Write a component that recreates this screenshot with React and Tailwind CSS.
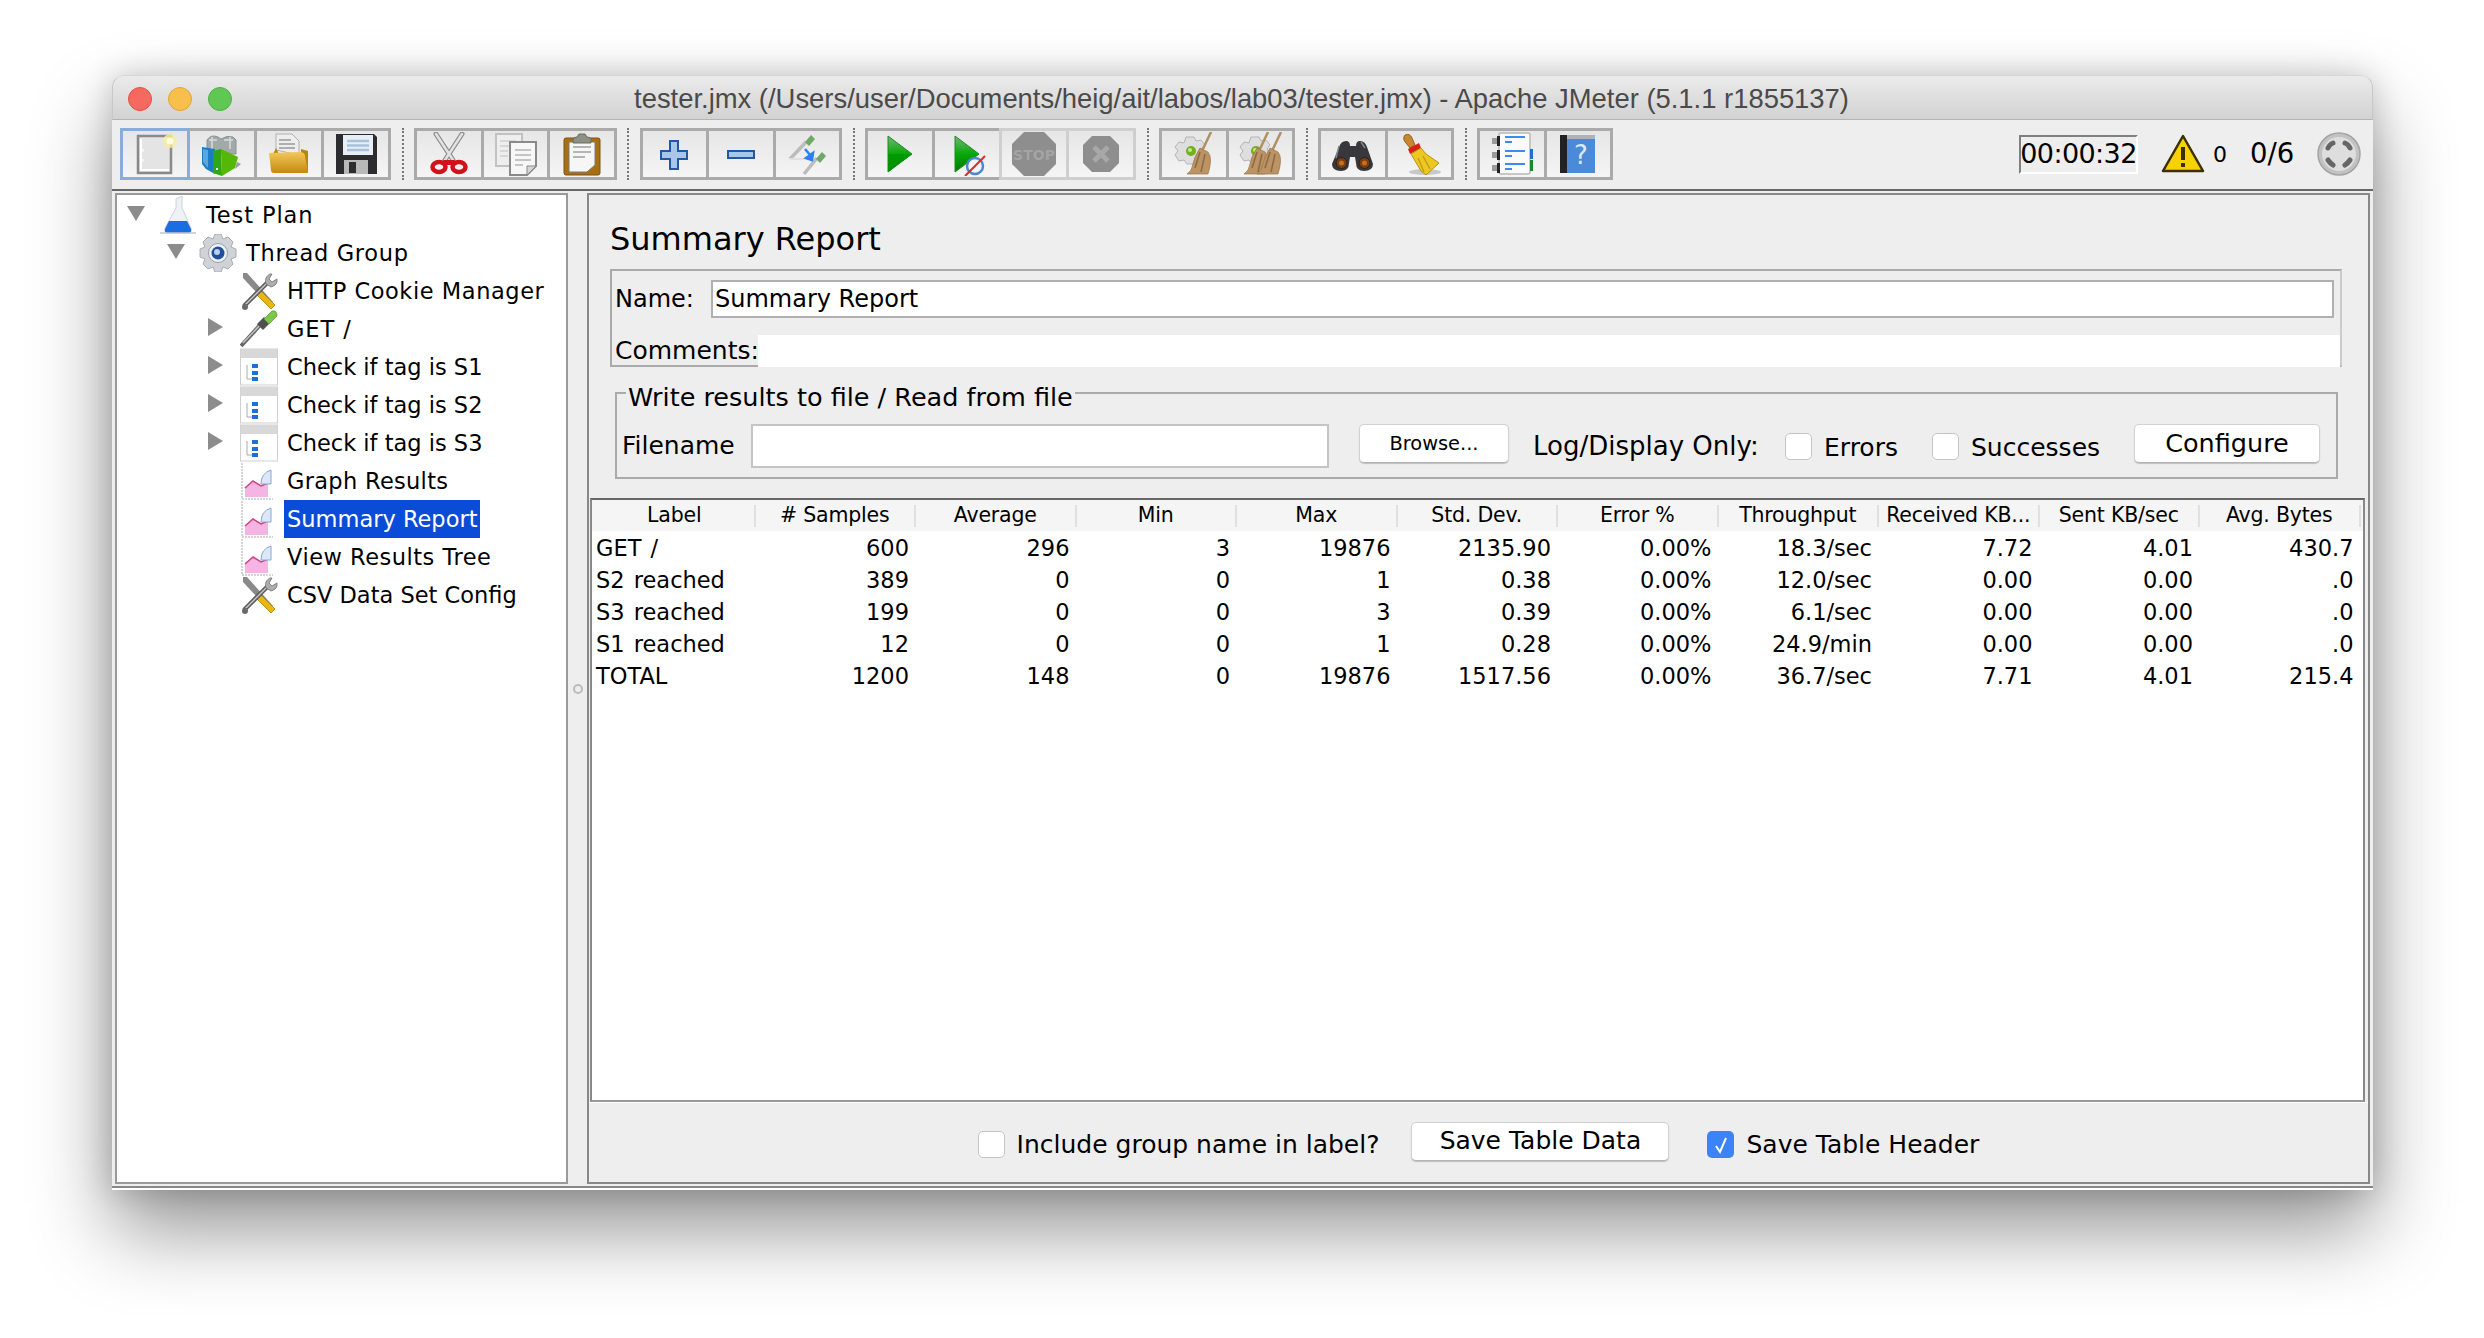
const ui = { fontFamily: '"DejaVu Sans", sans-serif' }

// toolbar icons are drawn on a 44 box, tree icons on a 38 box
const Ic = ({ size = 44, children }) => (
  <svg width={size} height={size} viewBox={`0 0 ${size} ${size}`} className="shrink-0">{children}</svg>
)

const NewIcon = () => (
  <Ic>
    <rect x="5" y="4" width="33" height="37" fill="#e4e4e4" stroke="#8a8a8a" strokeWidth="2.5" />
    <path d="M8 7v31h28" fill="none" stroke="#fff" strokeWidth="2" />
    <rect x="8" y="17" width="2.5" height="2.5" fill="#fff" />
    <rect x="8" y="27" width="2.5" height="2.5" fill="#fff" />
    <circle cx="37" cy="9" r="7" fill="#f7ee9c" opacity=".8" />
    <circle cx="37" cy="9" r="3.5" fill="#fdfbe0" />
  </Ic>
)
const TemplatesIcon = () => (
  <Ic>
    <path d="M7 8q4-6 11-3l3 2q6-4 12-2l3 3v14H7z" fill="#a3a9a8" stroke="#8b9191" />
    <path d="M9 8h8M24 8h9M12 5v12M30 5v12" stroke="#d8dcdc" strokeWidth="1.5" fill="none" />
    <path d="M2 15l13 2v25l-9-5-4-5z" fill="#1c7cc4" />
    <path d="M3 17l5 1v18l-5-6z" fill="#56a8e0" />
    <path d="M13 19l8-2 1 27-9-3z" fill="#2ea814" />
    <path d="M21 17l17 8-3 11-13 8z" fill="#55b806" />
    <path d="M37 30l4 2-6 5z" fill="#9a9a9a" />
    <rect x="16" y="36" width="2" height="2" fill="#fff" />
  </Ic>
)
const OpenIcon = () => (
  <Ic>
    <path d="M9 18V2h16l7 7v14z" fill="#eee" stroke="#b0b0b0" />
    <path d="M12 8h12M12 12h16M12 16h16" stroke="#999" strokeWidth="1.5" />
    <path d="M6 22l3-6 3 6h22v-5l7 2v21H6z" fill="#b98412" />
    <path d="M2 21l30-1q6 0 6 4l3 17H7q-3 0-3-3z" fill="url(#fold)" />
    <defs>
      <linearGradient id="fold" x1="0" y1="0" x2="0" y2="1">
        <stop offset="0" stopColor="#f2c75c" />
        <stop offset="1" stopColor="#c48a0c" />
      </linearGradient>
    </defs>
  </Ic>
)
const SaveIcon = () => (
  <Ic>
    <path d="M2 2h38l3 3v37H2z" fill="#2c2c2e" />
    <rect x="9" y="3" width="30" height="20" fill="#e7eef5" />
    <path d="M13 9h22M13 13.5h22M13 18h22" stroke="#a9c1da" strokeWidth="2.5" />
    <rect x="10" y="28" width="24" height="14" fill="#b8b8b8" />
    <rect x="15" y="30" width="7" height="11" fill="#2c2c2e" />
  </Ic>
)
const CutIcon = () => (
  <Ic>
    <path d="M9 2l17 26M35 2L18 28" stroke="#8d8d8d" strokeWidth="5" strokeLinecap="round" />
    <path d="M9 2l17 26M35 2L18 28" stroke="#e2e2e2" strokeWidth="2.5" strokeLinecap="round" />
    <ellipse cx="12" cy="35" rx="6.5" ry="5" fill="none" stroke="#d4101a" strokeWidth="4.5" />
    <ellipse cx="32" cy="35" rx="6.5" ry="5" fill="none" stroke="#d4101a" strokeWidth="4.5" />
    <path d="M16 28h12l-3 5h-6z" fill="#d4101a" />
  </Ic>
)
const CopyIcon = () => (
  <Ic>
    <rect x="3" y="2" width="26" height="32" fill="#eee" stroke="#c2c2c2" strokeWidth="2" />
    <path d="M7 9h16M7 14h16M7 19h8M7 24h8" stroke="#d0d0d0" strokeWidth="1.5" />
    <path d="M17 10h26v24l-9 9H17z" fill="#f7f7f7" stroke="#8a8a8a" strokeWidth="2" />
    <path d="M22 18h16M22 23h16M22 28h16M22 33h8" stroke="#b4b4b4" strokeWidth="1.5" />
    <path d="M34 43v-9h9z" fill="#d6d6d6" stroke="#8a8a8a" />
  </Ic>
)
const PasteIcon = () => (
  <Ic>
    <rect x="4" y="6" width="36" height="37" rx="2" fill="#a96f14" stroke="#7d5310" />
    <path d="M9 10h26v23l-8 7H9z" fill="#f6f6f6" stroke="#7a7a7a" />
    <path d="M13 15h18M13 20h18M13 25h12" stroke="#a0a0a0" strokeWidth="1.5" />
    <path d="M13 8q0-3 4-3l2-3h6l2 3q4 0 4 3v3H13z" fill="#8f9084" stroke="#6b6b60" />
  </Ic>
)
const PlusIcon = () => (
  <Ic>
    <path d="M18 9h8v10h9v8h-9v10h-8V27H9v-8h9z" fill="#a9c6e8" stroke="#2058a4" strokeWidth="2" />
  </Ic>
)
const MinusIcon = () => (
  <Ic>
    <rect x="9" y="19" width="26" height="7" fill="#a9c6e8" stroke="#2058a4" strokeWidth="2" />
  </Ic>
)
const ToggleIcon = () => (
  <Ic>
    <path d="M5 27L21 10" stroke="#bcbcbc" strokeWidth="3.5" />
    <path d="M20 10l6-7 4 4-6 7z" fill="#70a868" />
    <path d="M5 27h14" stroke="#e0e0e0" strokeWidth="2" />
    <path d="M19 42L32 26" stroke="#bcbcbc" strokeWidth="3.5" />
    <path d="M31 27l6-7 4 4-6 7z" fill="#70a868" />
    <path d="M20 17l6 7M28 21l-1 7-6-2z" stroke="#2a80f0" strokeWidth="2.5" fill="#2a80f0" />
  </Ic>
)
const PlayIcon = () => (
  <Ic>
    <defs>
      <linearGradient id="play" x1="0" y1="0" x2="0" y2="1">
        <stop offset="0" stopColor="#74b874" />
        <stop offset=".5" stopColor="#08a808" />
        <stop offset="1" stopColor="#007a00" />
      </linearGradient>
    </defs>
    <path d="M10 4l24 18-24 18z" fill="url(#play)" stroke="#1e8a28" />
    <path d="M10 22h24L10 40z" fill="#009600" opacity=".7" />
  </Ic>
)
const PlayNoIcon = () => (
  <Ic>
    <path d="M10 4l24 18-24 18z" fill="url(#play)" stroke="#1e8a28" />
    <circle cx="30" cy="34" r="8" fill="#f0f4fa" stroke="#4a88d0" strokeWidth="2.5" />
    <path d="M20 44l20-20" stroke="#e02828" strokeWidth="2" />
  </Ic>
)
const StopIcon = () => (
  <Ic>
    <path d="M12 0h20l12 12v20L32 44H12L0 32V12z" fill="#8e8e8e" />
    <text x="22" y="28" textAnchor="middle" fontSize="14" fontWeight="700" fill="#a4a4a4" style={ui}>STOP</text>
  </Ic>
)
const ShutIcon = () => (
  <Ic>
    <path d="M13 4h18l9 9v18l-9 9H13l-9-9V13z" fill="#8e8e8e" />
    <path d="M15 15l14 14M29 15L15 29" stroke="#a8a8a8" strokeWidth="5" />
  </Ic>
)
const Gear = ({ x = 0 }) => (
  <g transform={`translate(${x} 0)`}>
    <path d="M14 5h8l2 4 5-1 4 5-3 4 2 4-2 5-5 1-2 5h-8l-3-4-5 1-4-6 3-4-3-4 4-5 5 1z" fill="#dedede" stroke="#b4b4b4" />
    <circle cx="19" cy="19" r="5" fill="#74b020" />
    <circle cx="18" cy="18" r="2" fill="#c4e88c" />
  </g>
)
const Broom = ({ x = 0 }) => (
  <g transform={`translate(${x} 0)`}>
    <path d="M38 0L29 19" stroke="#b09060" strokeWidth="2.5" />
    <path d="M27 16l8 4q5 6 0 22H14q5-3 6-10t7-16z" fill="#bc9364" stroke="#9a7448" strokeWidth=".7" />
    <path d="M22 36l5-16M28 40l4-18" stroke="#8a6a44" strokeWidth="1.5" />
  </g>
)
const ClearIcon = () => (
  <Ic><Gear /><Broom x={1} /></Ic>
)
const ClearAllIcon = () => (
  <Ic><Gear x={-1} /><Broom x={-8} /><Broom x={5} /></Ic>
)
const BinocIcon = () => (
  <Ic>
    <path d="M8 15q2-6 7-6 4 0 4 5h6q0-5 4-5 5 0 7 6l6 17q0 7-9 7-8 0-8-8l-1-6h-5l-1 6q0 8-8 8-9 0-9-7z" fill="#38383c" />
    <circle cx="10.5" cy="31" r="5.5" fill="#7a3c10" stroke="#222" />
    <circle cx="33.5" cy="31" r="5.5" fill="#7a3c10" stroke="#222" />
    <circle cx="10.5" cy="31" r="2.5" fill="#c47020" />
    <circle cx="33.5" cy="31" r="2.5" fill="#c47020" />
    <path d="M8 14l-3 12M30 10l4 6" stroke="#85858a" strokeWidth="1.5" />
  </Ic>
)
const SweepIcon = () => (
  <Ic>
    <ellipse cx="28" cy="40" rx="16" ry="3" fill="#c8c8c8" />
    <path d="M8 3q5-2 7 3l3 7-5 3-4-5q-4-4-1-8z" fill="#c8862e" stroke="#96601c" />
    <path d="M11 17l11-6 2 5-11 6z" fill="#d82018" />
    <path d="M14 22l10-6 5 6 13 9-13 12-5-4z" fill="#ecc820" stroke="#b49410" />
    <path d="M21 26l6 14M26 24l7 13" stroke="#c49e18" strokeWidth="1.5" />
  </Ic>
)
const ListIcon = () => (
  <Ic>
    <rect x="9" y="1" width="31" height="41" rx="2" fill="#fbfbfb" stroke="#b8b8b8" strokeWidth="1.5" />
    <rect x="40" y="17" width="3" height="10" fill="#2070d0" />
    <rect x="40" y="28" width="3" height="11" fill="#1c8a20" />
    {[6, 20, 33].map((y) => (
      <g key={y}>
        <rect x="2" y={y} width="5" height="6" fill="#9a9a9a" />
        <rect x="7" y={y - 2} width="3" height="10" fill="#222" />
        <rect x="15" y={y - 2} width="20" height="2" fill="#3c8cf0" />
        <rect x="15" y={y + 3} width="7" height="2" fill="#3c8cf0" />
      </g>
    ))}
  </Ic>
)
const HelpIcon = () => (
  <Ic>
    <rect x="4" y="3" width="8" height="38" fill="#222" />
    <path d="M11 3h28v38H11z" fill="#4a8ad8" />
    <path d="M11 3h28v4H11z" fill="#aab4bc" />
    <text x="25" y="32" textAnchor="middle" fontSize="26" fill="#dcebfa" style={ui}>?</text>
  </Ic>
)

const FlaskIcon = () => (
  <Ic size={38}>
    <path d="M17 12V3l6-3v12l9 20q1 5-3 5H9q-4 0-3-5z" fill="#eef1f5" stroke="#ccd2d8" />
    <path d="M10 25h18l4 8q1 4-3 4H9q-4 0-3-4z" fill="#1a6ee0" />
    <path d="M1 37h36" stroke="#c0c6d0" strokeWidth="1.5" />
  </Ic>
)
const ThreadIcon = () => (
  <Ic size={38}>
    <path d="M16 0h6l2 5 5-2 5 5-2 5 5 2v8l-5 2 2 5-5 5-5-2-2 5h-6l-2-5-5 2-5-5 2-5-5-2v-8l5-2-2-5 5-5 5 2z" fill="#cfd2d6" stroke="#a8acb2" />
    <circle cx="19" cy="19" r="9.5" fill="#eef2f6" stroke="#9aa0a8" />
    <circle cx="19" cy="19" r="6.5" fill="#1e4f9c" />
    <circle cx="18" cy="18" r="3" fill="#bcd0e8" />
  </Ic>
)
const ToolsIcon = () => (
  <Ic size={38}>
    <path d="M3 1l4 0 26 29-4 4L3 6z" fill="#8a8a8a" />
    <path d="M21 19l14 14-4 4-14-14z" fill="#e8b810" stroke="#a88408" strokeWidth=".8" />
    <path d="M4 34L28 10" stroke="#5a5a5a" strokeWidth="4.5" />
    <path d="M4 34L28 10" stroke="#c8c8c8" strokeWidth="1.5" />
    <path d="M26 12q-2-7 4-10l2 0-3 5 3 3 5-3q1 6-6 8z" fill="#aeaeae" stroke="#707070" strokeWidth=".8" />
    <circle cx="5" cy="35" r="3" fill="#6a6a6a" />
  </Ic>
)
const SamplerIcon = () => (
  <Ic size={38}>
    <path d="M1 36L21 14" stroke="#666" strokeWidth="4" />
    <path d="M3 33L21 14" stroke="#c4c4c4" strokeWidth="1.5" />
    <path d="M17 14l7-7 6 6-7 7z" fill="#505050" />
    <path d="M24 9l8-8q5-1 5 5l-8 8z" fill="#7cc84c" stroke="#58a02c" strokeWidth=".8" />
  </Ic>
)
const LogicIcon = () => (
  <Ic size={38}>
    <rect x=".5" y="1" width="37" height="36" fill="#fff" stroke="#cfcfcf" />
    <rect x=".5" y="1" width="37" height="9" fill="#d8d8d8" />
    <path d="M7 17v14h5" fill="none" stroke="#aaa" />
    <rect x="12" y="16" width="6" height="4" fill="#1c70d8" />
    <rect x="12" y="23" width="6" height="4" fill="#1c70d8" />
    <rect x="12" y="29" width="6" height="4" fill="#1c70d8" />
  </Ic>
)
const GraphIcon = () => (
  <Ic size={38}>
    <path d="M2 1v36h31" fill="none" stroke="#aaa" strokeWidth="1" strokeDasharray="2 1" />
    <path d="M5 35V26l8-7 8 5 7-2v13z" fill="#f4b4e4" />
    <path d="M5 26l8-7 8 5 7-3" fill="none" stroke="#d04080" strokeWidth="1.5" />
    <path d="M31 8q-10 3-10 14l10 0z" fill="#dce8f8" stroke="#88a8d0" />
  </Ic>
)

const WarnIcon = () => (
  <svg width="44" height="40" viewBox="0 0 44 40">
    <path d="M22 2L42 37H2z" fill="#f6d200" stroke="#3a3000" strokeWidth="2.5" strokeLinejoin="round" />
    <rect x="20" y="13" width="4" height="13" fill="#3a3000" />
    <rect x="20" y="29" width="4" height="4" fill="#3a3000" />
  </svg>
)
const KnobIcon = () => (
  <svg width="44" height="44" viewBox="0 0 44 44">
    <circle cx="22" cy="22" r="21" fill="#c2c2c2" stroke="#a4a4a4" strokeWidth="1.5" />
    <circle cx="22" cy="22" r="17" fill="#dedede" />
    <path d="M11 16q2-4 5-5M28 11q3 1 5 5M33 28q-2 3-5 5M16 33q-3-2-5-5" fill="none" stroke="#666" strokeWidth="5" strokeLinecap="round" />
  </svg>
)
const TriDown = () => (
  <svg width="18" height="15" viewBox="0 0 18 15"><path d="M0 0h18L9 15z" fill="#8c8c8c" /></svg>
)
const TriRight = () => (
  <svg width="15" height="18" viewBox="0 0 15 18"><path d="M0 0l15 9-15 9z" fill="#8c8c8c" /></svg>
)

const toolGroups = [
  { cell: 'w-[64px]', icons: [NewIcon, TemplatesIcon, OpenIcon, SaveIcon] },
  { cell: 'w-[63.5px]', icons: [CutIcon, CopyIcon, PasteIcon] },
  { cell: 'w-[63.5px]', icons: [PlusIcon, MinusIcon, ToggleIcon] },
  { cell: 'w-[64px]', icons: [PlayIcon, PlayNoIcon, StopIcon, ShutIcon], dimFrom: 2 },
  { cell: 'w-[63.5px]', icons: [ClearIcon, ClearAllIcon] },
  { cell: 'w-[63.5px]', icons: [BinocIcon, SweepIcon] },
  { cell: 'w-[63.5px]', icons: [ListIcon, HelpIcon] },
]

const treeRows = [
  { label: 'Test Plan', pad: 'pl-[10px]', tri: 'down', Icon: FlaskIcon, track: 'tracking-[0.9px]' },
  { label: 'Thread Group', pad: 'pl-[50px]', tri: 'down', Icon: ThreadIcon, track: 'tracking-[0.7px]' },
  { label: 'HTTP Cookie Manager', pad: 'pl-[91px]', Icon: ToolsIcon, track: 'tracking-[0.55px]' },
  { label: 'GET /', pad: 'pl-[91px]', tri: 'right', Icon: SamplerIcon, track: 'tracking-[0.9px]' },
  { label: 'Check if tag is S1', pad: 'pl-[91px]', tri: 'right', Icon: LogicIcon },
  { label: 'Check if tag is S2', pad: 'pl-[91px]', tri: 'right', Icon: LogicIcon },
  { label: 'Check if tag is S3', pad: 'pl-[91px]', tri: 'right', Icon: LogicIcon },
  { label: 'Graph Results', pad: 'pl-[91px]', Icon: GraphIcon, track: 'tracking-[0.3px]' },
  { label: 'Summary Report', pad: 'pl-[91px]', Icon: GraphIcon, selected: true },
  { label: 'View Results Tree', pad: 'pl-[91px]', Icon: GraphIcon, track: 'tracking-[0.5px]' },
  { label: 'CSV Data Set Config', pad: 'pl-[91px]', Icon: ToolsIcon },
]

const columns = ['Label', '# Samples', 'Average', 'Min', 'Max', 'Std. Dev.', 'Error %', 'Throughput', 'Received KB...', 'Sent KB/sec', 'Avg. Bytes']

const rows = [
  ['GET /', '600', '296', '3', '19876', '2135.90', '0.00%', '18.3/sec', '7.72', '4.01', '430.7'],
  ['S2 reached', '389', '0', '0', '1', '0.38', '0.00%', '12.0/sec', '0.00', '0.00', '.0'],
  ['S3 reached', '199', '0', '0', '3', '0.39', '0.00%', '6.1/sec', '0.00', '0.00', '.0'],
  ['S1 reached', '12', '0', '0', '1', '0.28', '0.00%', '24.9/min', '0.00', '0.00', '.0'],
  ['TOTAL', '1200', '148', '0', '19876', '1517.56', '0.00%', '36.7/sec', '7.71', '4.01', '215.4'],
]

const Button = ({ children, className = '' }) => (
  <button className={`flex items-center justify-center h-[39px] rounded-[5px] bg-white border border-[#d2d2d2] border-b-[#b4b4b4] shadow-[0_1px_1px_rgba(0,0,0,0.2)] text-black ${className}`}>
    {children}
  </button>
)

const Check = ({ checked }) => (
  <span className={`flex items-center justify-center w-[27px] h-[27px] rounded-[5px] shrink-0 ${checked ? 'bg-[#3b84f6]' : 'bg-white border border-[#c4c4c4]'}`}>
    {checked && (
      <svg width="16" height="20" viewBox="0 0 16 20"><path d="M3 11l4 6 6-14" fill="none" stroke="#fff" strokeWidth="2" /></svg>
    )}
  </span>
)

function Toolbar() {
  return (
    <div className="flex items-start h-[69px] bg-[#eeeeee] pt-[8px] pl-[8px]">
      {toolGroups.map((group, g) => (
        <div key={g} className="flex items-start">
          <div className="flex gap-[3px] border-[3px] border-[#aaaaaa] bg-[#aaaaaa]">
            {group.icons.map((Icon, i) => (
              <div
                key={i}
                className={`flex items-center justify-center h-[46px] bg-gradient-to-b from-[#e6e6e6] to-[#f5f5f5] ${group.cell} ${g === 0 && i === 0 ? 'ring-[3px] ring-[#86aed8]' : ''} ${group.dimFrom && i >= group.dimFrom ? 'ring-[3px] ring-[#cfcfcf]' : ''}`}
              >
                <Icon />
              </div>
            ))}
          </div>
          {g < toolGroups.length - 1 && (
            <div className="w-[23px] h-[52px] flex justify-center">
              <div className="w-0 h-full border-l-2 border-dotted border-[#777777]" />
            </div>
          )}
        </div>
      ))}
      <div className="flex items-center ml-auto mr-[12px] h-[52px]">
        <div className="flex items-center justify-center w-[119px] h-[39px] border-2 border-[#808080] border-r-white border-b-white text-[27px] text-black tracking-[-0.6px]">
          00:00:32
        </div>
        <div className="ml-[23px]"><WarnIcon /></div>
        <span className="ml-[8px] w-[37px] text-[22px] text-black">0</span>
        <span className="text-[27.5px] text-black w-[67px]">0/6</span>
        <KnobIcon />
      </div>
    </div>
  )
}

function Tree() {
  return (
    <div className="w-[453px] h-full bg-white border-2 border-[#999999] pt-[1px] text-[22.5px] text-black">
      {treeRows.map((row) => (
        <div key={row.label} className={`flex items-center h-[38px] ${row.pad}`}>
          <div className="w-[32px] shrink-0 flex justify-start -mt-[4px]">
            {row.tri === 'down' && <TriDown />}
            {row.tri === 'right' && <TriRight />}
          </div>
          <row.Icon />
          <span className={`ml-[6px] pl-[3px] pr-[3px] h-[38px] leading-[38px] whitespace-nowrap ${row.track || ''} ${row.selected ? 'bg-[#0a4bd7] text-white' : ''}`}>
            {row.label}
          </span>
        </div>
      ))}
    </div>
  )
}

function ResultTable() {
  return (
    <div className="flex-1 min-h-0 mt-[19px] ml-[1px] mr-[3px] pl-[3px] bg-white border-2 border-t-[#666666] border-x-[#888888] border-b-[#999999]">
      <div className="grid grid-cols-[repeat(11,160.5px)] h-[31px] bg-[#f5f5f5] -ml-[3px] pl-[3px] items-center text-[20.5px] text-black">
        {columns.map((name) => (
          <div key={name} className="flex items-center justify-center h-[22px] border-r-2 border-[#e0e0e0] whitespace-nowrap tracking-[-0.2px]">
            {name}
          </div>
        ))}
      </div>
      <div className="pt-[1px] text-[22.5px] text-black [word-spacing:2px]">
        {rows.map((row) => (
          <div key={row[0]} className="grid grid-cols-[repeat(11,160.5px)] h-[32px] items-center">
            {row.map((value, i) => (
              <div key={i} className={i === 0 ? 'pl-[1px] whitespace-nowrap' : 'text-right pr-[7px]'}>{value}</div>
            ))}
          </div>
        ))}
      </div>
    </div>
  )
}

function ReportPanel() {
  return (
    <div className="flex-1 h-full min-w-0 flex flex-col bg-[#eeeeee] border-2 border-[#888888]">
      <div className="h-[74px] pl-[21px] pt-[24px] text-[32px] leading-[40px] text-black">Summary Report</div>

      <div className="ml-[21px] mr-[26px] h-[98px] shrink-0 border-2 border-[#aaaaaa] border-r-[#cccccc] pt-[9px] text-[24px] text-black">
        <div className="flex items-center h-[38px] pl-[3px]">
          <span className="w-[96px]">Name:</span>
          <div className="flex-1 h-full mr-[6px] bg-white border-2 border-[#b0b0b0] pl-[2px] leading-[34px]">Summary Report</div>
        </div>
        <div className="flex items-center h-[32px] mt-[17px] pl-[3px]">
          <span className="w-[143px] text-[25px]">Comments:</span>
          <div className="flex-1 h-full bg-white" />
        </div>
      </div>

      <fieldset className="ml-[26px] mr-[30px] mt-[10px] pb-[9px] pl-[5px] shrink-0 border-2 border-[#aaaaaa] text-[25px] text-black">
        <legend className="ml-[4px] px-[2px] h-[32px] leading-[41px] text-[25.5px]">Write results to file / Read from file</legend>
        <div className="flex items-start mt-[15px] h-[44px]">
          <span className="w-[129px] leading-[44px]">Filename</span>
          <div className="w-[578px] h-[44px] bg-white border-2 border-[#c4c4c4]" />
          <Button className="w-[150px] ml-[30px] text-[19.4px]">Browse...</Button>
          <span className="w-[252px] ml-[24px] leading-[44px] text-[26px] whitespace-nowrap">Log/Display Only:</span>
          <div className="mt-[9px]"><Check /></div>
          <span className="w-[108px] ml-[12px] leading-[48px]">Errors</span>
          <div className="mt-[9px]"><Check /></div>
          <span className="w-[163px] ml-[12px] leading-[48px]">Successes</span>
          <Button className="w-[186px] text-[25.5px]">Configure</Button>
        </div>
      </fieldset>

      <ResultTable />

      <div className="h-[80px] shrink-0 pt-[4px] flex items-center justify-center gap-[12px] border-t border-white text-[25px] text-black">
        <Check />
        <span>Include group name in label?</span>
        <Button className="w-[258px] ml-[20px] -mt-[7px]">Save Table Data</Button>
        <div className="ml-[26px]"><Check checked /></div>
        <span>Save Table Header</span>
      </div>
    </div>
  )
}

export default function App() {
  return (
    <div className="w-[2484px] h-[1338px] bg-white overflow-hidden pt-[75px] pl-[112px]" style={ui}>
      <div className="w-[2261px] h-[1115px] flex flex-col rounded-t-[12px] shadow-[0_40px_80px_rgba(0,0,0,0.42),0_0_30px_rgba(0,0,0,0.18)]">
        <div className="relative flex items-center justify-center h-[45px] shrink-0 pt-[2px] rounded-t-[12px] bg-gradient-to-b from-[#ebebeb] to-[#d2d2d2] border border-b-[#b4b4b4] border-x-[#c8c8c8] border-t-[#d6d6d6]">
          <div className="absolute left-[15px] top-[11px] flex gap-[16px]">
            <span className="w-[24px] h-[24px] rounded-full bg-[#f5695e] border border-[#e0524a]" />
            <span className="w-[24px] h-[24px] rounded-full bg-[#f9bf4d] border border-[#dfa53a]" />
            <span className="w-[24px] h-[24px] rounded-full bg-[#5fc853] border border-[#4caf42]" />
          </div>
          <span className="text-[27.4px] text-[#4a4a4a] whitespace-nowrap -ml-[2px]" style={{ fontFamily: '"Liberation Sans", sans-serif' }}>
            tester.jmx (/Users/user/Documents/heig/ait/labos/lab03/tester.jmx) - Apache JMeter (5.1.1 r1855137)
          </span>
        </div>

        <Toolbar />

        <div className="flex-1 min-h-0 flex flex-col bg-[#eeeeee] border-t-2 border-[#666666]">
          <div className="flex-1 min-h-0 flex pt-[2px] pl-[3px] pr-[3px] pb-[2px] border-b-2 border-[#888888]">
            <Tree />
            <div className="w-[19px] h-full shrink-0 flex items-center justify-center">
              <span className="w-[10px] h-[10px] rounded-full border-2 border-[#bbbbbb]" />
            </div>
            <ReportPanel />
          </div>
          <div className="h-[2px] shrink-0 bg-white" />
        </div>
      </div>
    </div>
  )
}
